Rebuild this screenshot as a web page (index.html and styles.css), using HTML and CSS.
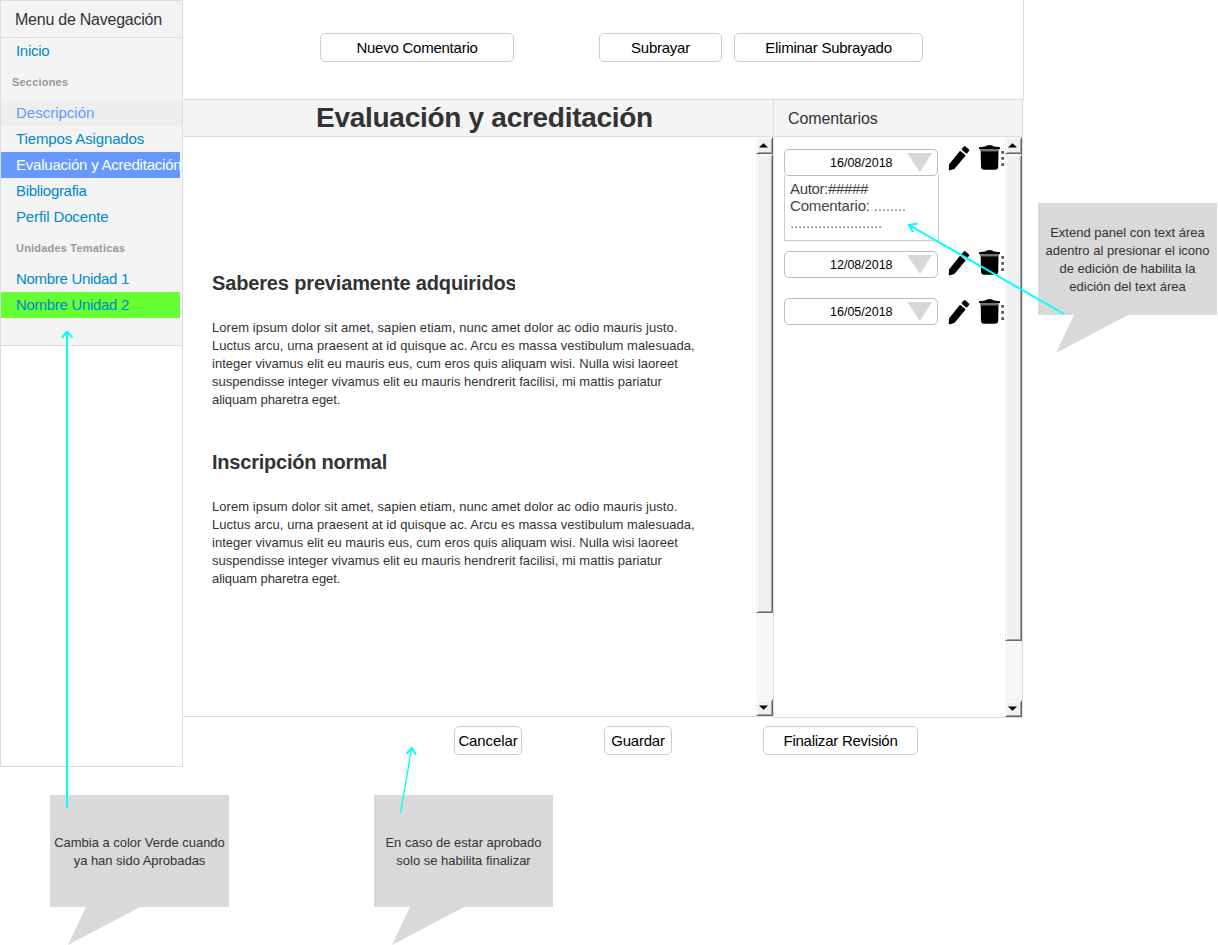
FILE: index.html
```html
<!DOCTYPE html>
<html lang="es">
<head>
<meta charset="utf-8">
<title>Evaluación y acreditación</title>
<link rel="stylesheet" href="styles.css">
</head>
<body>
<svg class="defs" width="0" height="0" aria-hidden="true">
  <symbol id="pencil" viewBox="0 0 22 28">
    <path d="M1.600 25.600 L1.800 20.800 L12.200 7.800 L16.600 11.400 L6 24.200 Z" stroke="#000" stroke-width="1.6" stroke-linejoin="round"/>
    <path d="M14.600 5.200 L16.600 3 L20.400 6.200 L18.500 8.600 Z" stroke="#000" stroke-width="1.8" stroke-linejoin="round"/>
  </symbol>
  <symbol id="trash" viewBox="0 0 28 28">
    <path d="M2 3.200 L8 2.600 Q9.500 1 12.500 1 Q15.500 1 17 2.600 L23 3.200 V5 H2 Z"/>
    <path d="M3 5 H22 V7.300 H3 Z" fill="#777"/>
    <path d="M3.700 7.300 H21.500 L21.200 23 Q20.800 25.800 18 25.800 H7 Q4.400 25.800 4 23 Z"/>
    <path d="M24.300 7 h2.700 v2.700 h-2.700 Z M24.300 13 h2.700 v2.700 h-2.700 Z M24.300 19.200 h2.700 v2.700 h-2.700 Z" fill="#555"/>
  </symbol>
</svg>
<div class="app">
  <nav class="sidebar">
    <div class="menu">
      <div class="menu-title">Menu de Navegación</div>
      <a class="item tight">Inicio</a>
      <div class="group">Secciones</div>
      <a class="item hover">Descripción</a>
      <a class="item snug">Tiempos Asignados</a>
      <a class="item active">Evaluación y Acreditación</a>
      <a class="item tight">Bibliografia</a>
      <a class="item snug">Perfil Docente</a>
      <div class="group units">Unidades Tematicas</div>
      <a class="item tight">Nombre Unidad 1</a>
      <a class="item tight approved">Nombre Unidad 2</a>
    </div>
  </nav>
  <div class="content">
    <div class="toolbar">
      <button class="btn new">Nuevo Comentario</button>
      <button class="btn underline">Subrayar</button>
      <button class="btn clear">Eliminar Subrayado</button>
    </div>
    <div class="columns">
      <section class="panel document">
        <h1>Evaluación y acreditación</h1>
        <div class="panel-body">
          <div class="text">
            <h2 class="first">Saberes previamente adquiridos</h2>
            <p><span class="wide">Lorem ipsum dolor sit amet, sapien etiam, nunc amet dolor ac odio mauris justo.</span><br><span class="wide">Luctus arcu, urna praesent at id quisque ac. Arcu es massa vestibulum malesuada,</span><br>integer vivamus elit eu mauris eus, cum eros quis aliquam wisi. Nulla wisi laoreet<br>suspendisse integer vivamus elit eu mauris hendrerit facilisi, mi mattis pariatur<br><span class="narrow">aliquam pharetra eget.</span></p>
            <h2>Inscripción normal</h2>
            <p><span class="wide">Lorem ipsum dolor sit amet, sapien etiam, nunc amet dolor ac odio mauris justo.</span><br><span class="wide">Luctus arcu, urna praesent at id quisque ac. Arcu es massa vestibulum malesuada,</span><br>integer vivamus elit eu mauris eus, cum eros quis aliquam wisi. Nulla wisi laoreet<br>suspendisse integer vivamus elit eu mauris hendrerit facilisi, mi mattis pariatur<br><span class="narrow">aliquam pharetra eget.</span></p>
          </div>
          <div class="scrollbar">
            <div class="arrow"><svg width="9" height="5"><path d="M0 4.500 L4.500 .2 L9 4.500 Z"/></svg></div>
            <div class="thumb doc-thumb"></div>
            <div class="arrow down"><svg width="9" height="5"><path d="M0 .5 L4.500 4.800 L9 .5 Z"/></svg></div>
          </div>
        </div>
      </section>
      <section class="panel comments">
        <h3>Comentarios</h3>
        <div class="panel-body">
          <div class="list">
            <div class="row">
              <div class="date"><span>16/08/2018</span><svg width="25" height="19"><path d="M0 0 H25 L13 19 Z"/></svg></div>
              <div class="tools"><svg class="pencil"><use href="#pencil"/></svg><svg class="trash"><use href="#trash"/></svg></div>
            </div>
            <div class="detail"><span class="author">Autor:#####</span><br><span class="label">Comentario: </span><span class="dots">........</span><br><span class="dots">.......................</span></div>
            <div class="row second">
              <div class="date"><span>12/08/2018</span><svg width="25" height="19"><path d="M0 0 H25 L13 19 Z"/></svg></div>
              <div class="tools"><svg class="pencil"><use href="#pencil"/></svg><svg class="trash"><use href="#trash"/></svg></div>
            </div>
            <div class="row third">
              <div class="date"><span>16/05/2018</span><svg width="25" height="19"><path d="M0 0 H25 L13 19 Z"/></svg></div>
              <div class="tools"><svg class="pencil"><use href="#pencil"/></svg><svg class="trash"><use href="#trash"/></svg></div>
            </div>
          </div>
          <div class="scrollbar">
            <div class="arrow"><svg width="9" height="5"><path d="M0 4.500 L4.500 .2 L9 4.500 Z"/></svg></div>
            <div class="thumb list-thumb"></div>
            <div class="arrow down"><svg width="9" height="5"><path d="M0 .5 L4.500 4.800 L9 .5 Z"/></svg></div>
          </div>
        </div>
      </section>
    </div>
    <div class="actions">
      <button class="btn cancel">Cancelar</button>
      <button class="btn save">Guardar</button>
      <button class="btn finish">Finalizar Revisión</button>
    </div>
  </div>
</div>

<aside class="note note-green">Cambia a color Verde cuando<br>ya han sido Aprobadas<svg class="tail" width="73" height="38"><path d="M18 0 H72 L0 38 Z"/></svg></aside>
<aside class="note note-finish">En caso de estar aprobado<br>solo se habilita finalizar<svg class="tail" width="73" height="38"><path d="M18 0 H72 L0 38 Z"/></svg></aside>
<aside class="note note-edit">Extend panel con text área<br>adentro al presionar el icono<br>de edición de habilita la<br>edición del text área<svg class="tail" width="73" height="38"><path d="M18 0 H72 L0 38 Z"/></svg></aside>

<svg class="arrows" width="1218" height="945" viewBox="0 0 1218 945">
  <path d="M67 808 V332 M62 337.500 L67 332 L72.500 337.500"/>
  <path class="thin" d="M400.500 813 L411.500 749"/><path d="M406.500 753.500 L412 748 L416 754.500"/>
  <path d="M1064 314 L909 225 M917.500 223.500 L909 225 L913 232"/>
</svg>
</body>
</html>
```
FILE: styles.css
```css
* { box-sizing: border-box; }
body {
  margin: 0;
  width: 1218px;
  height: 945px;
  position: relative;
  overflow: hidden;
  background: #fff;
  color: #333;
  font-family: "Liberation Sans", Arial, sans-serif;
}
.defs { position: absolute; }
.app { display: flex; width: 1024px; height: 767px; }

.sidebar { width: 183px; border: 1px solid #ddd; }
.menu { height: 345px; background: #f4f4f4; border-bottom: 1px solid #ddd; }
.menu-title { height: 37px; padding-left: 14px; border-bottom: 1px solid #ddd; font-size: 16px; line-height: 37px; letter-spacing: -.24px; white-space: nowrap; }
.item { display: block; width: 179px; height: 26px; padding-left: 15px; line-height: 25px; font-size: 15px; color: #08c; white-space: nowrap; }
.item.tight { letter-spacing: -.3px; }
.item.snug { letter-spacing: -.13px; }
.item.hover { width: 181px; background: #eee; color: #69f; }
.item.active { background: #69f; color: #fff; letter-spacing: -.22px; }
.item.approved { background: #6f3; }
.group { height: 36px; padding-left: 11px; font-size: 11px; font-weight: bold; line-height: 36px; color: #999; letter-spacing: .2px; }
.group.units { padding-left: 15px; }

.content { width: 841px; display: flex; flex-direction: column; }
.toolbar { height: 100px; display: flex; padding: 33px 0 0 137px; border-right: 1px solid #ddd; border-bottom: 1px solid #ddd; }
.btn { height: 29px; padding: 0; border: 1px solid #ccc; border-radius: 5px; background: #fff; color: #000; font: 15px "Liberation Sans", Arial, sans-serif; letter-spacing: -.24px; white-space: nowrap; }
.new { width: 194px; }
.underline { width: 123px; margin-left: 85px; }
.clear { width: 189px; margin-left: 12px; }
.columns { display: flex; height: 618px; width: 840px; }

.panel { display: flex; flex-direction: column; border-right: 1px solid #ddd; border-bottom: 1px solid #ddd; }
.document { width: 591px; height: 617px; }
.comments { width: 249px; height: 618px; }
.panel h1, .panel h3 { height: 37px; margin: 0; background: #f4f4f4; border-bottom: 1px solid #ddd; font-weight: normal; }
.panel h1 { padding-left: 13px; font-size: 28px; font-weight: bold; line-height: 35px; letter-spacing: -.28px; text-align: center; }
.panel h3 { padding-left: 14px; font-size: 16px; line-height: 37px; letter-spacing: -.1px; }
.panel-body { flex: 1; display: flex; min-height: 0; }
.text { flex: 1; padding-left: 29px; white-space: nowrap; }
.text h2 { margin: 38px 0 0; height: 35px; font-size: 20px; line-height: 30px; letter-spacing: -.22px; }
.text h2.first { width: 303px; margin-top: 131px; letter-spacing: -.15px; overflow: hidden; }
.text p { margin: 16px 0 0; height: 90px; font-size: 13px; line-height: 18px; letter-spacing: .015px; }
.wide { letter-spacing: .055px; }
.narrow { letter-spacing: -.08px; }

.scrollbar { width: 17px; display: flex; flex-direction: column; background: #f7f7f7; }
.arrow, .thumb { border: 1px solid; border-color: #f0f0f0 #696969 #696969 #f0f0f0; box-shadow: inset 1px 1px #fff, inset -1px -1px #a0a0a0; background: #f0f0f0; }
.arrow { height: 17px; display: flex; align-items: center; justify-content: center; padding-right: 2px; }
.arrow.down { margin-top: auto; }
.doc-thumb { height: 459px; }
.list-thumb { height: 487px; }

.list { flex: 1; padding: 7px 0 0 10px; }
.row { display: flex; height: 34px; }
.row.second { margin-top: 5px; }
.row.third { margin-top: 13px; }
.date { display: flex; width: 154px; height: 27px; margin-top: 5px; padding: 3px 5px 0 45px; border: 1px solid #bbb; border-radius: 5px; font-size: 12.5px; line-height: 20px; color: #000; justify-content: space-between; }
.date path { fill: #d8d8d8; }
.tools { display: flex; gap: 7px; height: 28px; margin-left: 10px; filter: blur(.4px); }
.second .tools { margin-top: 3px; }
.third .tools { margin-top: 5px; }
.pencil { width: 22px; height: 28px; }
.trash { width: 28px; height: 28px; }
.detail { width: 155px; height: 66px; margin-top: -3px; padding: 5px 0 0 5px; border: 1px solid #ccc; border-top: 0; font-size: 15px; line-height: 17px; color: #444; white-space: nowrap; }
.author { letter-spacing: -.35px; }
.label { letter-spacing: -.17px; }
.dots { letter-spacing: -.17px; color: #678; }

.actions { display: flex; padding: 8px 0 0 271px; }
.cancel { width: 68px; letter-spacing: -.1px; }
.save { width: 68px; margin-left: 82px; }
.finish { width: 155px; margin-left: 91px; }

.note { position: absolute; width: 179px; height: 112px; background: #d9d9d9; font-size: 13px; line-height: 18px; text-align: center; white-space: nowrap; }
.note-green { left: 50px; top: 795px; padding-top: 39px; letter-spacing: -.03px; }
.note-finish { left: 374px; top: 795px; padding-top: 39px; }
.note-edit { left: 1038px; top: 203px; padding-top: 21px; }
.tail { position: absolute; left: 18px; top: 112px; fill: #d9d9d9; }
.arrows { position: absolute; left: 0; top: 0; fill: none; stroke: #0ff; stroke-width: 2; }
.arrows .thin { stroke-width: 1.4; }
```
